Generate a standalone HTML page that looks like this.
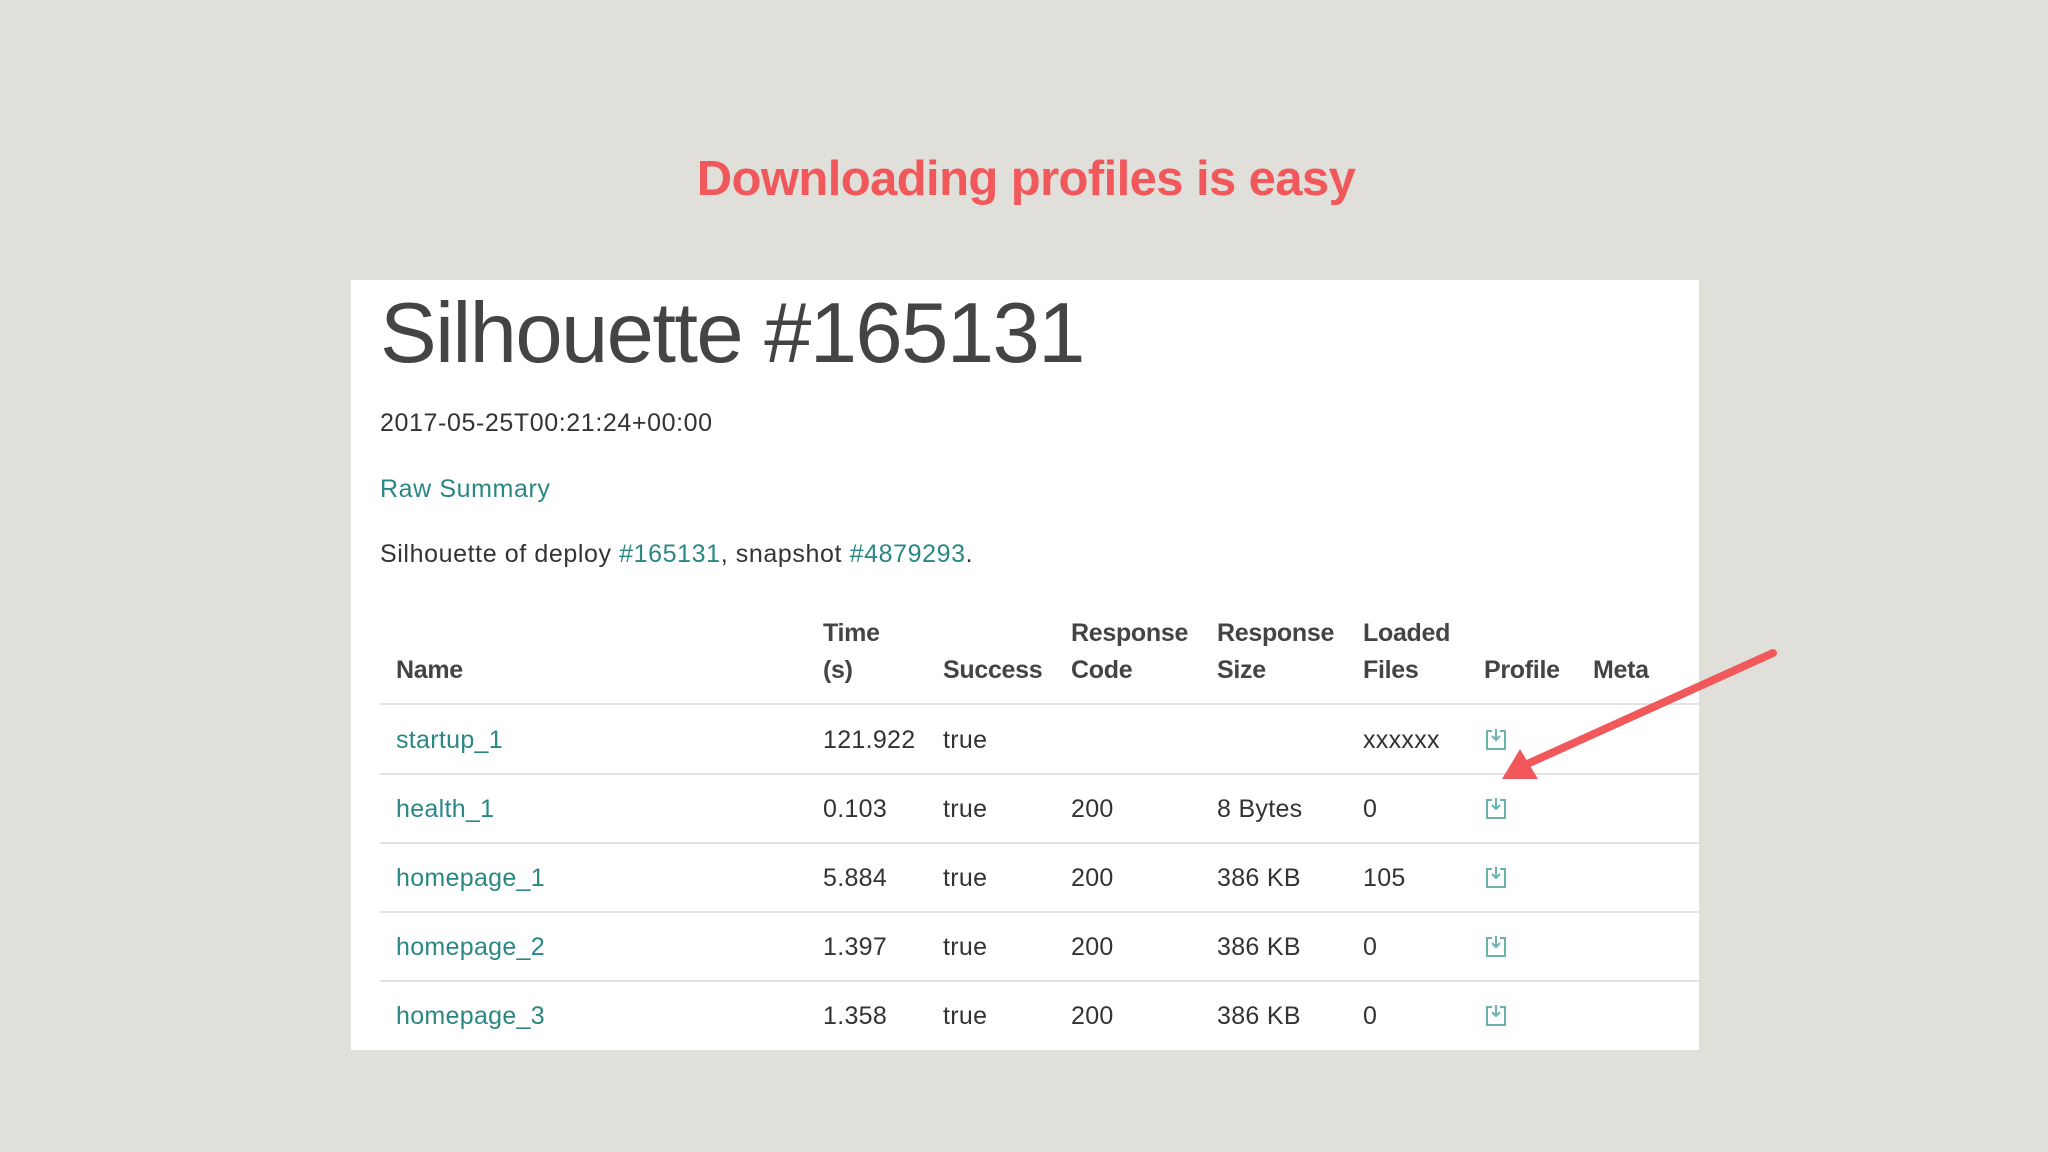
<!DOCTYPE html>
<html><head><meta charset="utf-8"><style>
body{margin:0;width:2048px;height:1152px;background:#e0dfd9;font-family:"Liberation Sans",sans-serif;position:relative;overflow:hidden;color:#3d3d3d}
.h{position:absolute;left:0;width:2052px;top:151px;text-align:center;font-size:49px;font-weight:bold;color:#f1585c;letter-spacing:-0.6px}
.panel{position:absolute;left:351px;top:280px;width:1348px;height:770px;background:#fff}
.t{position:absolute;left:29px;top:5px;font-size:85px;color:#444;letter-spacing:-1.6px}
.p{position:absolute;left:29px;font-size:25px;color:#333;letter-spacing:0.6px}
a{color:#2a8783;text-decoration:none}
.th{position:absolute;font-size:25px;font-weight:bold;color:#444;line-height:37px;letter-spacing:-0.3px}
.line{position:absolute;left:29px;right:0;height:2px;background:#e2e2e2}
.c{position:absolute;font-size:25px;color:#333;letter-spacing:0.3px}
svg.i{position:absolute;width:24px;height:24px}
</style></head><body>
<div class="h">Downloading profiles is easy</div>
<div class="panel">
<div class="t">Silhouette #165131</div>
<div class="p" style="top:129px">2017-05-25T00:21:24+00:00</div>
<div class="p" style="top:195px"><a>Raw Summary</a></div>
<div class="p" style="top:260px">Silhouette of deploy <a>#165131</a>, snapshot <a>#4879293</a>.</div>
<div class="th" style="left:45px;top:372px">Name</div>
<div class="th" style="left:472px;top:335px">Time<br>(s)</div>
<div class="th" style="left:592px;top:372px">Success</div>
<div class="th" style="left:720px;top:335px">Response<br>Code</div>
<div class="th" style="left:866px;top:335px">Response<br>Size</div>
<div class="th" style="left:1012px;top:335px">Loaded<br>Files</div>
<div class="th" style="left:1133px;top:372px">Profile</div>
<div class="th" style="left:1242px;top:372px">Meta</div>
<div class="line" style="top:423px"></div>
<div class="line" style="top:493px"></div>
<div class="line" style="top:562px"></div>
<div class="line" style="top:631px"></div>
<div class="line" style="top:700px"></div>
<div class="c" style="left:45px;top:446px"><a>startup_1</a></div><div class="c" style="left:472px;top:446px">121.922</div><div class="c" style="left:592px;top:446px">true</div><div class="c" style="left:1012px;top:446px">xxxxxx</div>
<div class="c" style="left:45px;top:515px"><a>health_1</a></div><div class="c" style="left:472px;top:515px">0.103</div><div class="c" style="left:592px;top:515px">true</div><div class="c" style="left:720px;top:515px">200</div><div class="c" style="left:866px;top:515px">8 Bytes</div><div class="c" style="left:1012px;top:515px">0</div>
<div class="c" style="left:45px;top:584px"><a>homepage_1</a></div><div class="c" style="left:472px;top:584px">5.884</div><div class="c" style="left:592px;top:584px">true</div><div class="c" style="left:720px;top:584px">200</div><div class="c" style="left:866px;top:584px">386 KB</div><div class="c" style="left:1012px;top:584px">105</div>
<div class="c" style="left:45px;top:653px"><a>homepage_2</a></div><div class="c" style="left:472px;top:653px">1.397</div><div class="c" style="left:592px;top:653px">true</div><div class="c" style="left:720px;top:653px">200</div><div class="c" style="left:866px;top:653px">386 KB</div><div class="c" style="left:1012px;top:653px">0</div>
<div class="c" style="left:45px;top:722px"><a>homepage_3</a></div><div class="c" style="left:472px;top:722px">1.358</div><div class="c" style="left:592px;top:722px">true</div><div class="c" style="left:720px;top:722px">200</div><div class="c" style="left:866px;top:722px">386 KB</div><div class="c" style="left:1012px;top:722px">0</div>
<svg class="i" style="left:1133px;top:447px" viewBox="0 0 24 24" fill="none" stroke="#6bb3ad" stroke-width="2"><path d="M8 4H3v18h18V4h-5"/><path d="M12 2v11M8 9l4 4 4-4"/></svg>
<svg class="i" style="left:1133px;top:516px" viewBox="0 0 24 24" fill="none" stroke="#6bb3ad" stroke-width="2"><path d="M8 4H3v18h18V4h-5"/><path d="M12 2v11M8 9l4 4 4-4"/></svg>
<svg class="i" style="left:1133px;top:585px" viewBox="0 0 24 24" fill="none" stroke="#6bb3ad" stroke-width="2"><path d="M8 4H3v18h18V4h-5"/><path d="M12 2v11M8 9l4 4 4-4"/></svg>
<svg class="i" style="left:1133px;top:654px" viewBox="0 0 24 24" fill="none" stroke="#6bb3ad" stroke-width="2"><path d="M8 4H3v18h18V4h-5"/><path d="M12 2v11M8 9l4 4 4-4"/></svg>
<svg class="i" style="left:1133px;top:723px" viewBox="0 0 24 24" fill="none" stroke="#6bb3ad" stroke-width="2"><path d="M8 4H3v18h18V4h-5"/><path d="M12 2v11M8 9l4 4 4-4"/></svg>
</div>
<svg style="position:absolute;left:0;top:0" width="2048" height="1152">
<line x1="1773" y1="653" x2="1525" y2="765" stroke="#f1585c" stroke-width="8" stroke-linecap="round"/>
<polygon points="1502,779 1520,749 1538,779" fill="#f1585c"/>
</svg>
</body></html>
